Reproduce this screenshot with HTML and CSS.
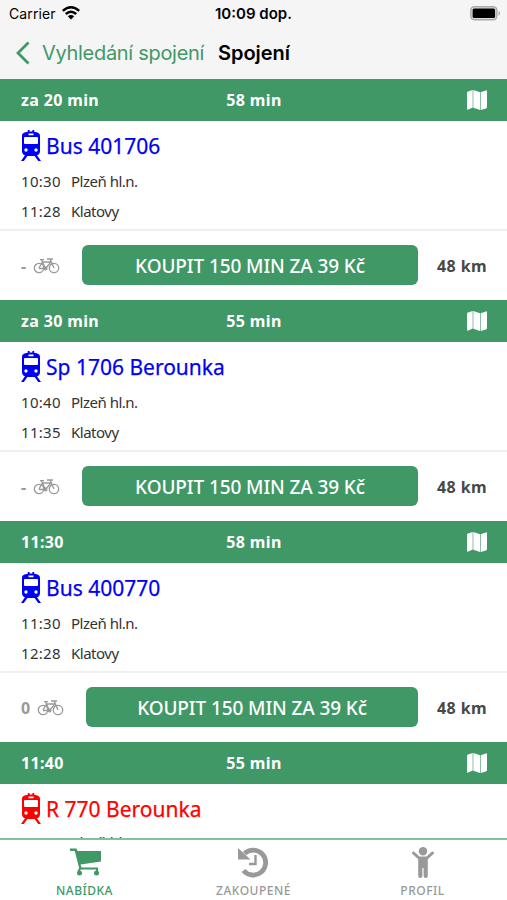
FILE: index.html
```
<!DOCTYPE html>
<html lang="cs">
<head>
<meta charset="utf-8">
<title>Spojení</title>
<link rel="stylesheet" href="styles.css">
</head>
<body>
<svg class="defs" width="0" height="0">
  <symbol id="map" viewBox="0 0 20 20"><path d="M0 3Q0 2 1 1.600L5.700 0V17.600L1.300 19.600Q0 20 0 18.800ZM6.300 0L13.100 2.300V20L6.300 17.700ZM13.700 2.300L18.800.4Q20 0 20 1.200V17Q20 18 19 18.400L13.700 20Z"/></symbol>
  <symbol id="train" viewBox="0 0 20 31"><path fill-rule="evenodd" d="M6.800 0H8.600V1.600H11.400V0H13.200V1.800C16.500 2.200 19 3 19 6V21Q19 24.500 16 25.200L20 31H17.200L13.600 26H6.400L2.800 31H0L4 25.200Q1 24.500 1 21V6C1 3 3.500 2.200 6.800 1.800ZM7.500 3.500V5.300H12.500V3.500ZM3 8V13Q3 14 4 14H16Q17 14 17 13V8Q17 7 16 7H4Q3 7 3 8ZM5 18.300A1.700 1.700 0 1 0 5 21.700A1.700 1.700 0 1 0 5 18.300ZM15 18.300A1.700 1.700 0 1 0 15 21.700A1.700 1.700 0 1 0 15 18.300Z"/></symbol>
  <symbol id="bike" viewBox="0 0 26 16"><g fill="none" stroke="currentColor" stroke-width="1.300"><circle cx="5.500" cy="10" r="4.700"/><circle cx="20.500" cy="10" r="4.700"/><path d="M5.500 10L9 4H17.500L12 10.500H5.500M12 10.500L8 2M6.500 1.600H10.500M20.500 10L16.500 1H13.500M17 1H19.500"/><circle cx="12" cy="10.500" r="1.400"/></g></symbol>
</svg>
<div class="screen">
  <header class="top">
    <div class="status">
      <div class="carrier"><span class="carrier-name">Carrier</span>
        <svg width="18" height="14" viewBox="0 0 18 14"><g fill="none" stroke="#000" stroke-width="2.400"><path d="M.8 4.900Q9-2.300 17.200 4.900"/><path d="M3.800 8Q9 3.300 14.200 8"/></g><path d="M5.800 10.200Q9 7.600 12.200 10.200L9 13.600Z"/></svg>
      </div>
      <div class="clock">10:09 dop.</div>
      <svg class="battery" width="30" height="15" viewBox="0 0 30 15"><rect x=".8" y=".8" width="26" height="13" rx="3.500" fill="#ddd" stroke="#aaa" stroke-width="1.400"/><rect x="2.600" y="2.600" width="22.500" height="9.400" rx="1.500"/><path d="M28.500 5Q30 5.500 30 7.300T28.500 9.700Z" fill="#aaa"/></svg>
    </div>
    <nav class="nav">
      <svg width="14" height="24" viewBox="0 0 14 24"><path d="M12.500 1.500L2 12L12.500 22.500" fill="none" stroke="#419867" stroke-width="2.800"/></svg>
      <span class="back">Vyhledání spojení</span>
      <h1 class="title">Spojení</h1>
    </nav>
  </header>
  <main class="list">
    <section class="trip">
      <div class="bar"><span>za 20 min</span><span class="duration">58 min</span><svg class="map"><use href="#map"/></svg></div>
      <div class="details">
        <h2 class="line"><svg class="train"><use href="#train"/></svg><span>Bus 401706</span></h2>
        <div class="stop"><span class="time">10:30</span><span class="place">Plzeň hl.n.</span></div>
        <div class="stop"><span class="time">11:28</span><span class="place">Klatovy</span></div>
      </div>
      <div class="actions"><div class="bikes"><span>-</span><svg class="bike"><use href="#bike"/></svg></div><button class="buy">KOUPIT 150 MIN ZA 39 Kč</button><span class="km">48 km</span></div>
    </section>
    <section class="trip">
      <div class="bar"><span>za 30 min</span><span class="duration">55 min</span><svg class="map"><use href="#map"/></svg></div>
      <div class="details">
        <h2 class="line"><svg class="train"><use href="#train"/></svg><span>Sp 1706 Berounka</span></h2>
        <div class="stop"><span class="time">10:40</span><span class="place">Plzeň hl.n.</span></div>
        <div class="stop"><span class="time">11:35</span><span class="place">Klatovy</span></div>
      </div>
      <div class="actions"><div class="bikes"><span>-</span><svg class="bike"><use href="#bike"/></svg></div><button class="buy">KOUPIT 150 MIN ZA 39 Kč</button><span class="km">48 km</span></div>
    </section>
    <section class="trip">
      <div class="bar"><span>11:30</span><span class="duration">58 min</span><svg class="map"><use href="#map"/></svg></div>
      <div class="details">
        <h2 class="line"><svg class="train"><use href="#train"/></svg><span>Bus 400770</span></h2>
        <div class="stop"><span class="time">11:30</span><span class="place">Plzeň hl.n.</span></div>
        <div class="stop"><span class="time">12:28</span><span class="place">Klatovy</span></div>
      </div>
      <div class="actions"><div class="bikes"><span>0</span><svg class="bike"><use href="#bike"/></svg></div><button class="buy">KOUPIT 150 MIN ZA 39 Kč</button><span class="km">48 km</span></div>
    </section>
    <section class="trip">
      <div class="bar"><span>11:40</span><span class="duration">55 min</span><svg class="map"><use href="#map"/></svg></div>
      <div class="details">
        <h2 class="line express"><svg class="train"><use href="#train"/></svg><span>R 770 Berounka</span></h2>
        <div class="stop"><span class="time">11:40</span><span class="place">Plzeň hl.n.</span></div>
      </div>
    </section>
  </main>
  <footer class="tabs">
    <div class="tab active"><svg width="31" height="28" viewBox="0 0 31 28"><path d="M0 0H6.500L7.500 2.500H31V13L10.500 16L11.500 19H28V21H9.500L4.800 2.500H0Z"/><path d="M10 20L8.500 23M27 20V23" stroke="currentColor" stroke-width="2"/><circle cx="9.500" cy="24.500" r="2.500"/><circle cx="26.500" cy="24.500" r="2.500"/></svg><span>NABÍDKA</span></div>
    <div class="tab"><svg width="31" height="31" viewBox="0 0 31 31"><path d="M6.500 6.500A12.500 12.500 0 1 1 5.500 23.500" fill="none" stroke="currentColor" stroke-width="4.800"/><path d="M0 1L12.500 12.500H0Z"/><path d="M17.500 8V17H11" fill="none" stroke="currentColor" stroke-width="2.400"/></svg><span>ZAKOUPENÉ</span></div>
    <div class="tab"><svg width="22" height="31" viewBox="0 0 22 31"><circle cx="11" cy="4.200" r="4.200"/><path d="M1.500 6L7 11H15L20.500 6" fill="none" stroke="currentColor" stroke-width="3" stroke-linecap="round" stroke-linejoin="round"/><path d="M6.200 10H15.800V29Q15.800 31 13.700 31T11.600 29V21H10.400V29Q10.400 31 8.300 31T6.200 29Z"/></svg><span>PROFIL</span></div>
  </footer>
</div>
</body>
</html>
```
FILE: styles.css
```
* { box-sizing: border-box; }
body { margin: 0; background: #fff; font-family: "Noto Sans", sans-serif; }
svg { display: block; flex: none; fill: currentColor; }
.defs { position: absolute; }
.screen { height: 900px; display: flex; flex-direction: column; overflow: hidden; }
.top { height: 79px; flex: none; background: #f5f5f5; font-family: Inter, sans-serif; color: #000; }
.status { height: 27px; display: grid; grid-template-columns: 1fr auto 1fr; align-items: center; padding: 0 7px 0 9px; font-size: 15px; line-height: 27px; }
.carrier { display: flex; gap: 6px; align-items: center; font-size: 14px; letter-spacing: .1px; }
.carrier svg { margin-top: -2px; }
.clock { font-weight: 600; font-size: 15px; margin-right: 2px; }
.battery { justify-self: end; }
.nav { height: 52px; display: flex; align-items: center; padding-left: 16px; }
.back { margin-left: 12px; width: 176px; font-size: 20px; letter-spacing: -.3px; color: #419867; white-space: nowrap; }
.title { margin: 0; font-size: 20px; letter-spacing: -.05px; font-weight: 600; white-space: nowrap; }
.list { flex: 1; min-height: 0; overflow: hidden; }
.trip { height: 221px; }
.bar { height: 42px; display: grid; grid-template-columns: 1fr auto 1fr; align-items: center; padding: 0 20px 0 21px; background: #419867; color: #fff; font-size: 16px; font-weight: 700; letter-spacing: .35px; }
.map { width: 20px; height: 20px; justify-self: end; }
.details { height: 110px; padding: 9px 21px 0; border-bottom: 2px solid #f0f0f0; }
.line { margin: 0; height: 36px; display: flex; gap: 5px; font-size: 21px; line-height: 32px; font-weight: 400; color: #0000f5; -webkit-text-stroke: .25px currentColor; white-space: nowrap; }
.express { color: #f00; height: 34px; }
.train { width: 20px; height: 31px; }
.stop { height: 30px; display: flex; align-items: center; font-size: 15px; line-height: 30px; color: #333; }
.time { width: 50px; letter-spacing: .3px; }
.place { letter-spacing: -.5px; }
.actions { height: 69px; display: flex; align-items: center; padding: 0 20px 0 21px; font-size: 16px; font-weight: 700; color: #484848; }
.km { width: 50px; letter-spacing: .4px; white-space: nowrap; }
.bikes { display: flex; align-items: center; gap: 7px; margin-right: 22px; color: #999; }
.bike { width: 27px; height: 16px; }
.buy { flex: 1; height: 40px; margin: -1px 19px 0 0; padding: 2px 0 0; border: 0; border-radius: 6px; background: #419867; color: #fff; font: 500 19px "Noto Sans", sans-serif; letter-spacing: -.1px; white-space: nowrap; }
.tabs { height: 62px; flex: none; display: grid; grid-template-columns: repeat(3, 1fr); padding: 0; border-top: 2px solid #87bf9d; background: #fff; }
.tab { display: flex; flex-direction: column; align-items: center; color: #999; font-size: 12px; letter-spacing: .5px; font-weight: 500; }
.tab svg { height: 31px; margin: 7px 0 5px; }
.tab span { line-height: 16px; }
.active { color: #419867; }
.tab.active svg { margin-left: 2px; }
```
